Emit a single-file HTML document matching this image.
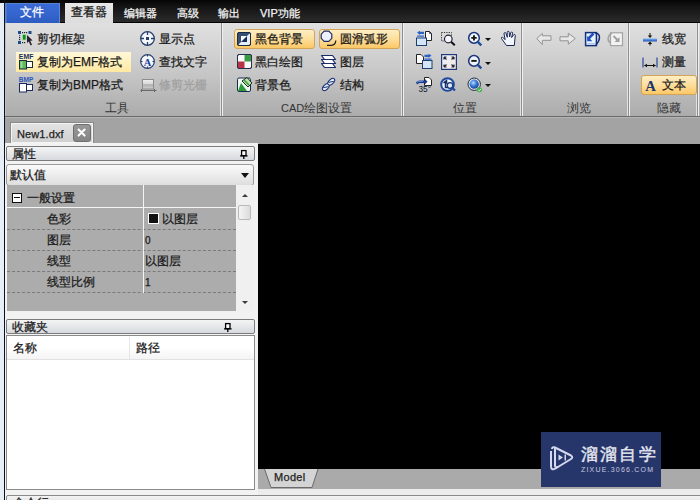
<!DOCTYPE html>
<html><head><meta charset="utf-8">
<style>
*{margin:0;padding:0;box-sizing:border-box}
html,body{width:700px;height:500px;overflow:hidden;background:#c8c8c8;font-family:"Liberation Sans",sans-serif;font-size:12px;color:#1a1a1a}
.a{position:absolute}
.t{position:absolute;white-space:nowrap;line-height:14px;font-size:12px;-webkit-text-stroke:0.25px currentColor}
#menubar{left:0;top:0;width:700px;height:23px;background:linear-gradient(#050505,#141414 30%,#242424 80%,#2a2a2a);border-bottom:1px solid #000}
#leftstrip{left:0;top:3px;width:4px;height:497px;background:#e8eef6}
#leftline{left:4px;top:0;width:1px;height:500px;background:#0c1020}
#ribbon{left:5px;top:23px;width:695px;height:93px;background:linear-gradient(#e0e0e0,#d6d6d6 22%,#c6c6c6 55%,#b4b4b4 85%,#acacac);border-left:1px solid #c0c0c0}
.sep{position:absolute;top:23px;width:3px;height:93px;background:linear-gradient(90deg,#e2e2e2 0 1px,#8e8e8e 1px 2px,#f0f0f0 2px 3px)}
.glabel{position:absolute;top:101px;color:#333;font-size:12px;line-height:14px;white-space:nowrap}
#work{left:5px;top:116px;width:695px;height:384px;background:#a3a3a3;border-top:1px solid #6a6a6a}
</style></head><body>
<div class="a" id="menubar"></div>
<!-- file button -->
<div class="a" style="left:5px;top:3px;width:55px;height:21px;background:linear-gradient(#3a6ad6,#3464cc 60%,#2c5cc0);border-right:1px solid #5a88e0;border-bottom:1px solid #4a70c0;box-shadow:inset 1px 1px 0 #5a82cc,inset 2px 0 0 #4a76cc"></div>
<div class="t" style="left:20px;top:5px;color:#fff">文件</div>
<!-- active tab -->
<div class="a" style="left:65px;top:3px;width:48px;height:20px;background:linear-gradient(#e8e8e8,#dcdcdc);"></div>
<div class="t" style="left:71px;top:5px;color:#111">查看器</div>
<div class="t" style="left:124px;top:6px;color:#f4f4f4;font-size:11px">编辑器</div>
<div class="t" style="left:177px;top:6px;color:#f4f4f4;font-size:11px">高级</div>
<div class="t" style="left:218px;top:6px;color:#f4f4f4;font-size:11px">输出</div>
<div class="t" style="left:260px;top:6px;color:#f4f4f4;font-size:11px"><span style="font-size:11px">VIP</span>功能</div>

<div class="a" id="ribbon"></div>
<div class="sep" style="left:220px"></div>
<div class="sep" style="left:401px"></div>
<div class="sep" style="left:520px"></div>
<div class="sep" style="left:627px"></div>
<div class="sep" style="left:696px"></div>

<!-- group 工具 -->
<div class="a" style="left:16px;top:52px;width:115px;height:20px;background:linear-gradient(#fff8d8,#ffe9a0);"></div>
<div class="t" style="left:37px;top:32px">剪切框架</div>
<div class="t" style="left:37px;top:55px">复制为EMF格式</div>
<div class="t" style="left:37px;top:78px">复制为BMP格式</div>
<div class="t" style="left:159px;top:32px">显示点</div>
<div class="t" style="left:159px;top:55px">查找文字</div>
<div class="t" style="left:159px;top:78px;color:#a0a0a0">修剪光栅</div>
<div class="glabel" style="left:105px">工具</div>

<!-- group CAD -->
<div class="a" style="left:234px;top:29px;width:81px;height:20px;border:1px solid #d4a456;border-radius:3px;background:linear-gradient(#fdeec4,#fde0a0 45%,#fcc866);"></div>
<div class="a" style="left:319px;top:29px;width:81px;height:20px;border:1px solid #d4a456;border-radius:3px;background:linear-gradient(#fdeec4,#fde0a0 45%,#fcc866);"></div>
<div class="t" style="left:255px;top:32px">黑色背景</div>
<div class="t" style="left:255px;top:55px">黑白绘图</div>
<div class="t" style="left:255px;top:78px">背景色</div>
<div class="t" style="left:340px;top:32px">圆滑弧形</div>
<div class="t" style="left:340px;top:55px">图层</div>
<div class="t" style="left:340px;top:78px">结构</div>
<div class="glabel" style="left:281px"><span style="font-size:11px">CAD</span>绘图设置</div>

<div class="glabel" style="left:453px">位置</div>
<div class="glabel" style="left:567px">浏览</div>

<!-- 隐藏 -->
<div class="a" style="left:641px;top:75px;width:56px;height:20px;border:1px solid #d4a456;border-radius:3px;background:linear-gradient(#fdeec4,#fde0a0 45%,#fcc866);"></div>
<div class="t" style="left:662px;top:32px">线宽</div>
<div class="t" style="left:662px;top:55px">测量</div>
<div class="t" style="left:662px;top:78px">文本</div>
<div class="glabel" style="left:657px">隐藏</div>

<!-- ICONS -->
<svg class="a" style="left:17px;top:30px" width="17" height="17" viewBox="0 0 17 17">
<rect x="1" y="1" width="3" height="3" fill="#1b4d86"/><rect x="11.5" y="1" width="3" height="3" fill="#1b4d86"/><rect x="1" y="11" width="3" height="3" fill="#1b4d86"/>
<rect x="5" y="2" width="1.2" height="1.2" fill="#223"/><rect x="7" y="2" width="1.2" height="1.2" fill="#223"/><rect x="9" y="2" width="1.2" height="1.2" fill="#223"/>
<rect x="2" y="5" width="1.2" height="1.2" fill="#2a5a90"/><rect x="2" y="7" width="1.2" height="1.2" fill="#223"/><rect x="2" y="9" width="1.2" height="1.2" fill="#223"/>
<rect x="5" y="12" width="1.2" height="1.2" fill="#223"/><rect x="7" y="12" width="1.2" height="1.2" fill="#223"/>
<rect x="5.5" y="4.5" width="3.5" height="5.5" fill="#118a22" stroke="#9ee09e" stroke-width="0.8"/>
<path d="M10 5 L10 13 L11.8 11.4 L13.6 15.5 L15 14.8 L13.2 10.8 L15.6 10.6 Z" fill="#2a1f30"/>
</svg>
<svg class="a" style="left:18px;top:53px" width="17" height="17" viewBox="0 0 17 17">
<text x="0.8" y="5.9" font-family="Liberation Sans" font-weight="bold" font-size="6.8" fill="#1a2e60" textLength="14.6" lengthAdjust="spacingAndGlyphs">EMF</text>
<rect x="7.5" y="8.5" width="7" height="6" fill="#fff" stroke="#1a2a40" stroke-width="1"/>
<rect x="1.5" y="7.5" width="7" height="8.5" fill="#5cba5c" stroke="#1a2a30" stroke-width="1"/>
<rect x="2.5" y="8.5" width="2" height="6.5" fill="#9ad89a"/>
</svg>
<svg class="a" style="left:18px;top:76px" width="17" height="17" viewBox="0 0 17 17">
<text x="0.8" y="6.2" font-family="Liberation Sans" font-weight="bold" font-size="6.8" fill="#2a56b8" textLength="14.6" lengthAdjust="spacingAndGlyphs">BMP</text>
<rect x="7.5" y="8.5" width="7" height="6" fill="#fff" stroke="#1a2a60" stroke-width="1"/>
<rect x="1.5" y="7.5" width="7" height="8.5" fill="#fff" stroke="#1a2a60" stroke-width="1"/>
</svg>
<!-- 显示点 -->
<svg class="a" style="left:139px;top:30px" width="17" height="17" viewBox="0 0 17 17">
<circle cx="8.5" cy="8.5" r="6.8" fill="#f4f6fa" stroke="#27406e" stroke-width="1.3"/>
<path d="M8.5 1.5v3.5M8.5 12v3.5M1.5 8.5h3.5M12 8.5h3.5" stroke="#27406e" stroke-width="1.3"/>
<rect x="7" y="7" width="3" height="3" fill="#27406e"/>
</svg>
<!-- 查找文字 -->
<svg class="a" style="left:139px;top:53px" width="17" height="17" viewBox="0 0 17 17">
<circle cx="8.5" cy="8.5" r="6.8" fill="#f4f6fa" stroke="#27406e" stroke-width="1.2"/>
<path d="M8.5 1.5v2M8.5 13.5v2M1.5 8.5h2M13.5 8.5h2" stroke="#27406e" stroke-width="1.1"/>
<text x="8.5" y="12.6" text-anchor="middle" font-family="Liberation Serif" font-weight="bold" font-size="10.5" fill="#1f3f98">A</text>
</svg>
<!-- 修剪光栅 -->
<svg class="a" style="left:140px;top:78px" width="17" height="14" viewBox="0 0 17 14">
<defs><linearGradient id="rg" x1="0" y1="0" x2="0" y2="1"><stop offset="0" stop-color="#f0f0f0"/><stop offset="0.45" stop-color="#d8d8d8"/><stop offset="0.55" stop-color="#b0b0b0"/><stop offset="1" stop-color="#d0d0d0"/></linearGradient></defs>
<rect x="2.5" y="1.5" width="11" height="9.5" fill="url(#rg)" stroke="#8c8c8c"/>
<path d="M0.5 12.5h16M1.5 11v3M14.5 11v3" stroke="#6a6a6a" stroke-width="1"/>
</svg>
<!-- 黑色背景 -->
<svg class="a" style="left:237px;top:32px" width="14" height="14" viewBox="0 0 14 14">
<rect x="0.5" y="0.5" width="13" height="13" rx="1.5" fill="#e4f0f8" stroke="#1c2a4a"/>
<path d="M1 1 H13 L1 13 Z" fill="#34506e"/>
<rect x="4" y="4" width="6" height="6" fill="#1e2a5a"/>
<path d="M4 4 H10 L4 10 Z" fill="#f4f8fc"/>
<rect x="0.5" y="0.5" width="13" height="13" rx="1.5" fill="none" stroke="#1c2a4a"/>
</svg>
<!-- 黑白绘图 -->
<svg class="a" style="left:237px;top:54px" width="15" height="15" viewBox="0 0 15 15">
<rect x="0.5" y="0.5" width="14" height="14" rx="1.5" fill="#fafafa" stroke="#2a3050"/>
<rect x="7.5" y="1" width="6.5" height="6.5" fill="#3a9a44"/>
<rect x="1" y="7.5" width="6.5" height="6.5" fill="#b83444"/>
<rect x="0.5" y="0.5" width="14" height="14" rx="1.5" fill="none" stroke="#2a3050"/>
</svg>
<!-- 背景色 -->
<svg class="a" style="left:237px;top:76px" width="16" height="16" viewBox="0 0 16 16">
<rect x="0.5" y="2" width="13" height="13.5" rx="1.5" fill="#eef8f0" stroke="#1a2a50"/>
<path d="M1 15 L4 7 L10 15 Z" fill="#2a9a3a"/>
<path d="M5 5 L11 11 L15 7 L10 1.5 Z" fill="#b8e0a0" stroke="#1a2a2a" stroke-width="1"/>
<path d="M7 4 L12 9" stroke="#3a9a4a" stroke-width="1.5"/>
</svg>
<!-- 圆滑弧形 -->
<svg class="a" style="left:320px;top:30px" width="18" height="18" viewBox="0 0 18 18">
<path d="M4.2 1.2 H8.8 L11.8 4.2 V8.3 L8.8 11.3 H4.2 L1.2 8.3 V4.2 Z" fill="#eef0fc" stroke="#1e2e5a" stroke-width="1.2"/>
<path d="M7 15.3 H11.5 Q15.5 15 15.8 10.5" stroke="#222" stroke-width="1.3" fill="none"/>
</svg>
<!-- 图层 -->
<svg class="a" style="left:320px;top:54px" width="17" height="16" viewBox="0 0 17 16">
<path d="M1.5 9.5 L4.5 13.5 H15.5 L12.5 9.5 Z" fill="#fff" stroke="#1a2a6a" stroke-width="1.2" stroke-linejoin="round"/>
<path d="M1.5 5.5 L4.5 9.5 H15.5 L12.5 5.5 Z" fill="#fff" stroke="#1a2a6a" stroke-width="1.2" stroke-linejoin="round"/>
<path d="M1.5 1.5 L4.5 5.5 H15.5 L12.5 1.5 Z" fill="#fff" stroke="#1a2a6a" stroke-width="1.2" stroke-linejoin="round"/>
</svg>
<!-- 结构 -->
<svg class="a" style="left:320px;top:76px" width="17" height="17" viewBox="0 0 17 17">
<g transform="rotate(-45 8.5 8.5)">
<ellipse cx="4.8" cy="8.5" rx="4.2" ry="2.4" fill="#e4eefe" stroke="#14286a" stroke-width="1"/>
<ellipse cx="12.4" cy="8.5" rx="4.2" ry="2.4" fill="#e4eefe" stroke="#14286a" stroke-width="1"/>
<path d="M2.5 7 L7 10 M10 7 L14.5 10" stroke="#14286a" stroke-width="0.9"/>
</g>
</svg>
<!-- 位置 row1 col1 -->
<svg class="a" style="left:416px;top:30px" width="17" height="17" viewBox="0 0 17 17">
<path d="M9.5 1.5 H13.5 L15.5 3.5 V10.5 H9.5 Z" fill="#fff" stroke="#222"/>
<path d="M13.5 1.5 V3.5 H15.5" fill="none" stroke="#222" stroke-width="0.7"/>
<rect x="0.5" y="8" width="10" height="7.5" fill="#d2e6f8" stroke="#1e3e6e"/>
<path d="M1 2.5 L4 0.8 V1.8 H8 V4 H4 V5 Z" fill="#2a62c8"/>
<rect x="1" y="5.5" width="7" height="1.2" fill="#2a62c8"/>
</svg>
<!-- row1 col2: zoom window -->
<svg class="a" style="left:440px;top:30px" width="17" height="17" viewBox="0 0 17 17">
<rect x="1.5" y="2.5" width="10" height="8.5" fill="none" stroke="#333" stroke-dasharray="1.2 1.2"/>
<circle cx="8.3" cy="9" r="3.8" fill="#f4f8fc" stroke="#223" stroke-width="1.2"/>
<path d="M11 11.7 L14.8 15.3" stroke="#111" stroke-width="2"/>
</svg>
<!-- row1 col3 zoom in -->
<svg class="a" style="left:467px;top:31px" width="16" height="16" viewBox="0 0 16 16">
<circle cx="7" cy="6.9" r="5.3" fill="#eef4ff" stroke="#1c3478" stroke-width="1.5"/>
<path d="M4.3 6.9h5.4M7 4.2v5.4" stroke="#1a1a10" stroke-width="1.9"/>
<path d="M10.8 10.8 L14.3 14.3" stroke="#1e4a9a" stroke-width="2.4"/>
</svg>
<div class="a" style="left:485px;top:38px;width:0;height:0;border-left:3px solid transparent;border-right:3px solid transparent;border-top:3px solid #111"></div>
<!-- hand -->
<svg class="a" style="left:500px;top:30px" width="17" height="17" viewBox="0 0 17 17">
<path d="M6.5 15.5 L1.5 8.5 Q1 7 2.6 7.3 L5.2 9.6 L4 3.8 Q3.9 2.6 5 2.6 Q5.8 2.6 6.1 3.6 L7.3 7.3 L7.2 2.3 Q7.2 1.3 8.2 1.3 Q9.2 1.3 9.2 2.3 L9.6 7 L10.8 2.6 Q11.1 1.8 12 2 Q12.8 2.3 12.6 3.2 L11.6 7.6 L13.6 4.8 Q14.2 4.2 14.9 4.6 Q15.6 5.1 15.2 6 L14.3 15.5 Z" fill="#f2f6ff" stroke="#1a2450" stroke-width="1"/>
</svg>
<!-- row2 col1 -->
<svg class="a" style="left:416px;top:53px" width="17" height="17" viewBox="0 0 17 17">
<path d="M0.5 1.5 H5 L7.5 4 V10.5 H0.5 Z" fill="#fff" stroke="#222"/>
<rect x="6.5" y="7.5" width="9.5" height="8" fill="#d2e6f8" stroke="#1e3e6e"/>
<path d="M15.5 2.5 L12.5 0.8 V1.8 H8.5 V4 H12.5 V5 Z" fill="#2a62c8"/>
<rect x="8.5" y="5.5" width="7" height="1.2" fill="#2a62c8"/>
</svg>
<!-- row2 col2 full extent -->
<svg class="a" style="left:441px;top:54px" width="16" height="16" viewBox="0 0 16 16">
<defs><linearGradient id="fe" x1="0" y1="0" x2="1" y2="1"><stop offset="0" stop-color="#eaf0fa"/><stop offset="1" stop-color="#f4e8e0"/></linearGradient></defs>
<rect x="0.6" y="0.6" width="14.8" height="14.8" fill="url(#fe)" stroke="#1e3a7a" stroke-width="1.2"/>
<path d="M3 3 L5.5 5.5 M3 3h2.5M3 3v2.5 M13 3 L10.5 5.5 M13 3h-2.5M13 3v2.5 M3 13 L5.5 10.5 M3 13h2.5M3 13v-2.5 M13 13 L10.5 10.5 M13 13h-2.5M13 13v-2.5" stroke="#223" stroke-width="1.1"/>
</svg>
<!-- row2 col3 zoom out -->
<svg class="a" style="left:467px;top:54px" width="16" height="16" viewBox="0 0 16 16">
<circle cx="7" cy="6.9" r="5.3" fill="#eef4ff" stroke="#1c3478" stroke-width="1.5"/>
<path d="M4.3 6.9h5.4" stroke="#1a1a10" stroke-width="1.9"/>
<path d="M10.8 10.8 L14.3 14.3" stroke="#1e4a9a" stroke-width="2.4"/>
</svg>
<div class="a" style="left:485px;top:62px;width:0;height:0;border-left:3px solid transparent;border-right:3px solid transparent;border-top:3px solid #111"></div>
<!-- row3 col1 35° -->
<svg class="a" style="left:414px;top:75px" width="19" height="19" viewBox="0 0 19 19">
<path d="M10.5 2.5 H15 L17.5 5 V10.5 H10.5 Z" fill="#fff" stroke="#222"/>
<path d="M2 7.5 Q3 5.5 6 5.5 H11 V4 L13.5 6.8 L11 9.3 V8 H6 Q4 8 3 9.5 Z" fill="#1a3a90"/>
<path d="M3 7.2 Q4 6.3 6 6.3 H9" stroke="#7ab0f0" stroke-width="0.8" fill="none"/>
<text x="4.4" y="16.8" font-family="Liberation Sans" font-size="8.6" fill="#101838" textLength="12.6" lengthAdjust="spacingAndGlyphs">35°</text>
</svg>
<!-- row3 col2 -->
<svg class="a" style="left:440px;top:77px" width="17" height="16" viewBox="0 0 17 16">
<circle cx="7.5" cy="7.5" r="6.3" fill="#f4f8ff" stroke="#1e4aa0" stroke-width="2"/>
<path d="M3.5 6 L6.5 3.5 V6 H5.5 V10.5 H9" stroke="#1a2a5a" stroke-width="1.5" fill="none"/>
<circle cx="10" cy="8.5" r="2.8" fill="#dde8f8" stroke="#1a3a7a" stroke-width="1.3"/>
<path d="M12 10.5 L15 13.5" stroke="#1e4a9a" stroke-width="2.2"/>
</svg>
<!-- row3 col3 globe -->
<svg class="a" style="left:467px;top:77px" width="16" height="16" viewBox="0 0 16 16">
<defs><radialGradient id="gl" cx="0.4" cy="0.35" r="0.7"><stop offset="0" stop-color="#b8dcff"/><stop offset="0.5" stop-color="#3a7ad8"/><stop offset="1" stop-color="#1a3a90"/></radialGradient></defs>
<circle cx="7.2" cy="7.2" r="6.2" fill="#dde4ee" stroke="#222a3a" stroke-width="1"/>
<circle cx="7.2" cy="7.2" r="4.6" fill="url(#gl)"/>
<path d="M11 11 L13 13" stroke="#222" stroke-width="1.5"/>
<circle cx="12.5" cy="12.8" r="2.5" fill="#3ab04a"/>
<path d="M11.2 12.8 L12.3 13.9 L14.1 11.8" stroke="#dff5df" stroke-width="1" fill="none"/>
</svg>
<div class="a" style="left:485px;top:84px;width:0;height:0;border-left:3px solid transparent;border-right:3px solid transparent;border-top:3px solid #111"></div>
<!-- browse -->
<svg class="a" style="left:536px;top:32px" width="16" height="14" viewBox="0 0 16 14">
<path d="M0.8 6.6 L6.3 1.5 V3.8 H15 V8.3 H6.3 V12.6 Z" fill="#e8e8e8" stroke="#929292" stroke-width="1" stroke-linejoin="round"/>
</svg>
<svg class="a" style="left:559px;top:32px" width="17" height="14" viewBox="0 0 17 14">
<path d="M16.3 6.5 L9.3 1.2 V4.8 H1 V8.8 H9.3 V12.2 Z" fill="#e8e8e8" stroke="#929292" stroke-width="1" stroke-linejoin="round"/>
</svg>
<svg class="a" style="left:584px;top:31px" width="17" height="16" viewBox="0 0 17 16">
<rect x="1.6" y="1.6" width="10.8" height="13" fill="#eaf4ff" stroke="#14307a" stroke-width="1.5"/>
<path d="M3 12.5 H11" stroke="#a8c8f0" stroke-width="1"/>
<path d="M9.5 2.5 L4 8" stroke="#1e50c0" stroke-width="2.6"/>
<path d="M3.2 5 V10.2 H8.4 Z" fill="#1e50c0"/>
<path d="M11 1.8 Q15.5 2.5 15.5 6.5 Q15.5 10 12 14" stroke="#14307a" stroke-width="1.4" fill="none"/>
</svg>
<svg class="a" style="left:607px;top:31px" width="17" height="16" viewBox="0 0 17 16">
<rect x="3.5" y="1.8" width="12" height="12.8" fill="#f2f2f2" stroke="#a4a4a4" stroke-width="1.2"/>
<path d="M5 2.5 Q1.2 3.5 1.2 8 Q1.2 11 4 12" stroke="#a4a4a4" stroke-width="1.6" fill="none"/>
<path d="M6.5 5 L11 9.5" stroke="#a0a0a0" stroke-width="2"/>
<path d="M12.5 6 V11 H7.5 Z" fill="#a0a0a0"/>
</svg>
<!-- 隐藏 -->
<svg class="a" style="left:642px;top:32px" width="16" height="14" viewBox="0 0 16 14">
<defs><linearGradient id="lw" x1="0" y1="0" x2="0" y2="1"><stop offset="0" stop-color="#7ab0f0"/><stop offset="1" stop-color="#1e50b8"/></linearGradient></defs>
<rect x="1" y="6.5" width="14" height="3" fill="url(#lw)"/>
<path d="M8 1 V4" stroke="#111" stroke-width="1"/><path d="M5.8 3.5 H10.2 L8 6 Z" fill="#111"/>
<path d="M8 13.5 V11.5" stroke="#111" stroke-width="1"/><path d="M5.8 12 H10.2 L8 9.6 Z" fill="#111"/>
</svg>
<svg class="a" style="left:642px;top:57px" width="16" height="12" viewBox="0 0 16 12">
<path d="M1 0.5 V10.5 M15 0.5 V10.5" stroke="#2a4aa0" stroke-width="1.2"/>
<path d="M2.5 8.5 H13.5" stroke="#111" stroke-width="1"/>
<path d="M2.2 8.5 L5 6.8 V10.2 Z M13.8 8.5 L11 6.8 V10.2 Z" fill="#111"/>
</svg>
<svg class="a" style="left:643px;top:79px" width="15" height="14" viewBox="0 0 15 14">
<text x="7.3" y="11.8" text-anchor="middle" font-family="Liberation Serif" font-weight="bold" font-size="14" fill="#1a3470" transform="scale(1.05 1)">A</text>
</svg>

<div class="a" id="work"></div>
<div class="a" style="left:5px;top:117px;width:695px;height:1px;background:#b4b4b4"></div>
<!-- doc tab -->
<div class="a" style="left:10px;top:122px;width:84px;height:21px;border:1px solid #8a8a8a;border-bottom:none;background:linear-gradient(#e4e4e4,#cfcfcf);box-shadow:inset 0 0 0 1px #f4f4f4"></div>
<div class="t" style="left:17px;top:127px;font-size:11px;color:#222;letter-spacing:0.1px">New1.dxf</div>
<div class="a" style="left:73px;top:124px;width:18px;height:18px;border-radius:3px;background:linear-gradient(#989898,#858585);border:1px solid #6e6e6e"></div>
<svg class="a" style="left:73px;top:124px" width="18" height="18" viewBox="0 0 18 18"><path d="M5.6 5.6 L11.6 11.6 M11.6 5.6 L5.6 11.6" stroke="#fff" stroke-width="2.1" stroke-linecap="round"/></svg>
<!-- panel column -->
<div class="a" style="left:5px;top:143px;width:253px;height:357px;background:#f2f2f2"></div>
<!-- canvas -->
<div class="a" style="left:258px;top:144px;width:442px;height:325px;background:#000"></div>
<div class="a" style="left:258px;top:469px;width:442px;height:20px;background:#aaaaaa"></div>
<div class="a" style="left:258px;top:489px;width:442px;height:11px;background:#ececec"></div>
<!-- 属性 header -->
<div class="a" style="left:6px;top:146px;width:249px;height:15px;border:1px solid #7c7c7c;border-radius:2px;background:linear-gradient(#f4f4f4,#d6dade)"></div>
<div class="t" style="left:12px;top:147px">属性</div>
<!-- dropdown -->
<div class="a" style="left:6px;top:164px;width:248px;height:22px;border:1px solid #9a9a9a;border-radius:3px;background:linear-gradient(#fafafa,#ececec 50%,#dedede)"></div>
<div class="t" style="left:10px;top:168px">默认值</div>
<!-- grid -->
<div class="a" style="left:7px;top:185px;width:229px;height:126px;background:#acacac"></div>
<div class="a" style="left:7px;top:207px;width:229px;height:1px;background:#f4f4f4"></div>
<div class="a" style="left:7px;top:229px;width:229px;height:0;border-top:1px dashed #7a7a7a"></div>
<div class="a" style="left:7px;top:250px;width:229px;height:0;border-top:1px dashed #7a7a7a"></div>
<div class="a" style="left:7px;top:271px;width:229px;height:0;border-top:1px dashed #7a7a7a"></div>
<div class="a" style="left:7px;top:292px;width:229px;height:0;border-top:1px dashed #7a7a7a"></div>
<div class="a" style="left:143px;top:185px;width:1px;height:108px;background:#f4f4f4"></div>
<div class="a" style="left:12px;top:193px;width:10px;height:10px;border:1px solid #111;background:#fff"></div>
<div class="a" style="left:14px;top:197px;width:6px;height:1px;background:#111"></div>
<div class="t" style="left:27px;top:191px">一般设置</div>
<div class="t" style="left:47px;top:212px">色彩</div>
<div class="t" style="left:47px;top:233px">图层</div>
<div class="t" style="left:47px;top:254px">线型</div>
<div class="t" style="left:47px;top:275px">线型比例</div>
<div class="a" style="left:148px;top:213px;width:11px;height:11px;border:1px solid #fff;background:#111"></div>
<div class="t" style="left:162px;top:212px">以图层</div>
<div class="t" style="left:145px;top:234px;font-size:10px">0</div>
<div class="t" style="left:145px;top:254px">以图层</div>
<div class="t" style="left:145px;top:276px;font-size:10px">1</div>
<div class="a" style="left:236px;top:185px;width:18px;height:126px;background:#f0f0f0"></div>
<div class="a" style="left:238px;top:205px;width:13px;height:15px;border:1px solid #b8b8b8;border-radius:2px;background:linear-gradient(90deg,#f4f4f4,#dcdcdc)"></div>
<div class="a" style="left:242px;top:194px;width:0;height:0;border-left:3.5px solid transparent;border-right:3.5px solid transparent;border-bottom:3.5px solid #3a3a3a"></div>
<div class="a" style="left:242px;top:301px;width:0;height:0;border-left:3.5px solid transparent;border-right:3.5px solid transparent;border-top:3.5px solid #3a3a3a"></div>
<!-- 收藏夹 header -->
<div class="a" style="left:6px;top:319px;width:249px;height:15px;border:1px solid #7c7c7c;border-radius:2px;background:linear-gradient(#f4f4f4,#d6dade)"></div>
<div class="t" style="left:12px;top:320px">收藏夹</div>
<!-- list -->
<div class="a" style="left:6px;top:335px;width:249px;height:155px;border:1px solid #8a8a8a;background:#fff"></div>
<!-- pins -->
<svg class="a" style="left:239px;top:149px" width="10" height="10" viewBox="0 0 10 10"><rect x="2.6" y="1.6" width="4.4" height="5" fill="#fff" stroke="#000" stroke-width="1.3"/><path d="M1 6.9 H8.6 M4.8 7 V10" stroke="#000" stroke-width="1.3"/></svg>
<svg class="a" style="left:223px;top:322px" width="10" height="10" viewBox="0 0 10 10"><rect x="2.6" y="1.6" width="4.4" height="5" fill="#fff" stroke="#000" stroke-width="1.3"/><path d="M1 6.9 H8.6 M4.8 7 V10" stroke="#000" stroke-width="1.3"/></svg>
<!-- dropdown arrow -->
<div class="a" style="left:241px;top:173px;width:0;height:0;border-left:4px solid transparent;border-right:4px solid transparent;border-top:5px solid #111"></div>
<!-- list header -->
<div class="a" style="left:7px;top:336px;width:247px;height:23px;background:linear-gradient(#fff,#fff 50%,#f4f4f4)"></div>
<div class="a" style="left:7px;top:359px;width:247px;height:1px;background:#e2e2e2"></div>
<div class="a" style="left:129px;top:337px;width:1px;height:22px;background:#e6e6e6"></div>
<div class="t" style="left:13px;top:341px">名称</div>
<div class="t" style="left:136px;top:341px">路径</div>
<!-- model tab -->
<svg class="a" style="left:262px;top:469px" width="58" height="20" viewBox="0 0 58 20"><path d="M2.5 0 L9 18.5 L50 18.5 L56 0" fill="#d4d4d4" stroke="#6a6a6a" stroke-width="1"/></svg>
<div class="t" style="left:274px;top:470px;font-size:11px;color:#222;letter-spacing:0.3px">Model</div>
<!-- watermark -->
<div class="a" style="left:541px;top:432px;width:120px;height:55px;background:#27366a"></div>
<div class="t" style="left:581px;top:445px;color:#e4e6f0;font-size:17px;line-height:20px;letter-spacing:2.2px;-webkit-text-stroke:0.4px currentColor">溜溜自学</div>
<div class="t" style="left:581px;top:465px;color:#c8cce0;font-size:7px;line-height:9px;letter-spacing:1.2px;-webkit-text-stroke:0">ZIXUE.3066.COM</div>
<svg class="a" style="left:541px;top:438px" width="40" height="40" viewBox="0 0 40 40">
<path d="M11 11 Q11 8.5 14 9.5 L30 17.5 Q32.5 19 30 21 L14.5 30.5 Q10 33 10 28 V13" stroke="#d4d8ec" stroke-width="2" fill="none" stroke-linejoin="round"/>
<path d="M14 10.5 V27.5 Q14 30 16.5 29" stroke="#d4d8ec" stroke-width="2" fill="none" stroke-linecap="round"/>
<path d="M17.5 16.5 V22.5 L22 19.5 Z" fill="#d4d8ec"/>
<rect x="23.5" y="16.5" width="1.5" height="6" fill="#d4d8ec"/>
</svg>
<div class="a" style="left:6px;top:495px;width:700px;height:8px;border:1px solid #8a8a8a;border-radius:2px;background:linear-gradient(#f4f4f4,#e4e4e4)"></div>
<div class="t" style="left:13px;top:496px">命令行</div>

<div class="a" id="leftstrip"></div>
<div class="a" id="leftline"></div>
</body></html>
